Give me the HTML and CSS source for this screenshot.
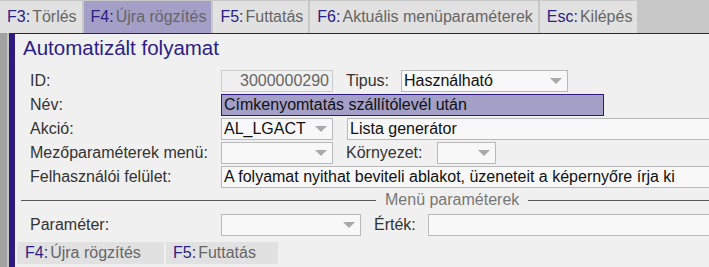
FILE: index.html
```html
<!DOCTYPE html>
<html>
<head>
  <link rel="stylesheet" href="styles.css">
</head>
<body>
  <div class="screen">
    <div class="tabs">
      <div class="tab"><span class="key">F3:</span>Törlés</div>
      <div class="tab active"><span class="key">F4:</span>Újra rögzítés</div>
      <div class="tab"><span class="key">F5:</span>Futtatás</div>
      <div class="tab"><span class="key">F6:</span>Aktuális menüparaméterek</div>
      <div class="tab"><span class="key">Esc:</span>Kilépés</div>
    </div>

    <div class="frame">
      <div class="edge"></div>
      <div class="panel">
        <h1 class="title">Automatizált folyamat</h1>

        <div class="form">
          <div class="row">
            <div class="label">ID:</div>
            <div class="box readonly w-short">3000000290</div>
            <div class="label side w-tipus">Tipus:</div>
            <div class="box select w-tipus-sel"><span class="val">Használható</span><span class="arrow"></span></div>
          </div>
          <div class="row">
            <div class="label">Név:</div>
            <div class="box focus w-name">Címkenyomtatás szállítólevél után</div>
          </div>
          <div class="row">
            <div class="label">Akció:</div>
            <div class="box select w-short"><span class="val">AL_LGACT</span><span class="arrow"></span></div>
            <div class="box w-wide akcio-name">Lista generátor</div>
          </div>
          <div class="row">
            <div class="label">Mezőparaméterek menü:</div>
            <div class="box select w-short"><span class="val"></span><span class="arrow"></span></div>
            <div class="label side w-korny">Környezet:</div>
            <div class="box select w-korny-sel"><span class="val"></span><span class="arrow"></span></div>
          </div>
          <div class="row">
            <div class="label">Felhasználói felület:</div>
            <div class="box w-full">A folyamat nyithat beviteli ablakot, üzeneteit a képernyőre írja ki</div>
          </div>
        </div>

        <div class="divider">
          <span class="line short"></span>
          <span class="legend">Menü paraméterek</span>
          <span class="line"></span>
        </div>

        <div class="form">
          <div class="row">
            <div class="label">Paraméter:</div>
            <div class="box select w-param"><span class="val"></span><span class="arrow"></span></div>
            <div class="label side w-ertek">Érték:</div>
            <div class="box w-wide"></div>
          </div>
        </div>

        <div class="buttons">
          <div class="btn btn-f4"><span class="key">F4:</span>Újra rögzítés</div>
          <div class="btn btn-f5"><span class="key">F5:</span>Futtatás</div>
        </div>
      </div>
    </div>
  </div>
</body>
</html>
```

FILE: styles.css
```css
html, body {
  margin: 0;
  height: 100%;
  overflow: hidden;
}

body {
  font-family: "Liberation Sans", Arial, sans-serif;
  font-size: 16px;
  background: #c8c8c8;
}

.screen {
  width: 900px;
  height: 267px;
  display: flex;
  flex-direction: column;
}

.tabs {
  display: flex;
  gap: 2px;
  height: 33px;
  padding-top: 1px;
  box-sizing: border-box;
  background: #c8c8c8;
}

.tab {
  background: #e1e1e1;
  color: #666;
  padding: 0 5px 0 7px;
  line-height: 32px;
  white-space: nowrap;
}

.tab.active {
  background: #a39fc7;
}

.key {
  color: #2b2185;
  margin-right: 2px;
}

.frame {
  flex: 1;
  display: flex;
}

.edge {
  width: 7px;
  border-right: 2px solid #c4c4c4;
  background: #a2a2a2;
}

.panel {
  flex: 1;
  background: #f0f0f0;
  border-left: 6px solid #2e1a7e;
  border-top: 1px solid #2e1a7e;
}

.title {
  margin: 2px 0 0 8px;
  font-size: 20.5px;
  font-weight: normal;
  line-height: 24px;
  color: #2b2185;
}

.form {
  display: flex;
  flex-direction: column;
  gap: 2px;
  padding-left: 15px;
}

.title + .form {
  margin-top: 10px;
}

.row {
  display: flex;
  height: 22px;
  align-items: center;
}

.label {
  width: 191px;
  color: #333;
  white-space: nowrap;
}

.label.side {
  margin-left: 13px;
}

.w-tipus { width: 55px; }
.w-korny { width: 91px; }
.w-ertek { width: 54px; }

.box {
  height: 22px;
  box-sizing: border-box;
  border: 1px solid #b9b9b9;
  background: #f8f8f8;
  color: #111;
  line-height: 20px;
  padding: 0 2px;
  white-space: nowrap;
  overflow: hidden;
}

.box.readonly {
  background: #f0f0f0;
  border-color: #cbcbcb;
  color: #666;
  text-align: right;
  padding-right: 3px;
}

.box.focus {
  background: #a39fc7;
  border-color: #2e1a7e;
}

.select {
  display: flex;
  align-items: center;
  padding-right: 5px;
}

.select .val {
  flex: 1;
}

.arrow {
  width: 0;
  height: 0;
  border-left: 6px solid transparent;
  border-right: 6px solid transparent;
  border-top: 6px solid #a9a9a9;
}

.w-short { width: 112px; }
.w-tipus-sel { width: 167px; }
.w-name { width: 383px; }
.w-korny-sel { width: 59px; }
.w-param { width: 140px; }
.w-wide { width: 420px; }
.w-full { width: 560px; }

.akcio-name {
  margin-left: 14px;
}

.divider {
  display: flex;
  align-items: center;
  height: 20px;
  margin: 2px 0 4px 6px;
}

.line {
  flex: 1;
  height: 1px;
  background: #5a5a5a;
}

.line.short {
  flex: none;
  width: 355px;
}

.legend {
  color: #777;
  padding: 0 9px;
}

.buttons {
  display: flex;
  gap: 2px;
  margin: 6px 0 0 2px;
}

.btn {
  height: 22px;
  line-height: 22px;
  background: #e1e1e1;
  color: #666;
  box-sizing: border-box;
  white-space: nowrap;
}

.btn-f4 {
  width: 147px;
  padding-left: 8px;
}

.btn-f5 {
  width: 112px;
  padding-left: 7px;
}
```
